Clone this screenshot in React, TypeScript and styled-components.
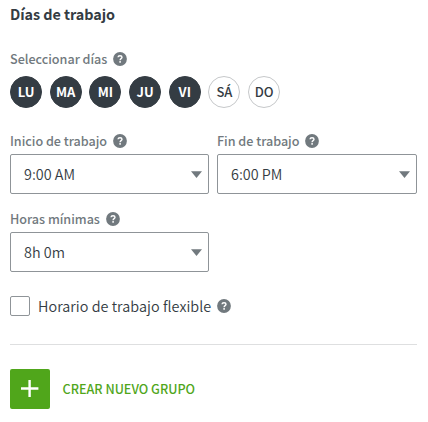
import React from "react";
import styled, { createGlobalStyle } from "styled-components";

const GlobalStyle = createGlobalStyle`
  *, *::before, *::after { box-sizing: border-box; }
  body {
    margin: 0;
    background: #fff;
    color: #343c43;
    font-family: "Noto Sans CJK SC", "Noto Sans", sans-serif;
  }
  button { font-family: inherit; margin: 0; padding: 0; }
`;

const Panel = styled.main`
  display: flex;
  flex-direction: column;
  width: 427px;
  height: 422px;
  padding: 4px 10px 0;
`;

const Title = styled.h2`
  margin: 0 0 35px;
  font-size: 14.4px;
  font-weight: 700;
  line-height: 20px;
  letter-spacing: -0.05px;
`;

const LabelRow = styled.div`
  display: flex;
  align-items: center;
  gap: 6px;
  height: 20px;
  margin: -10px 0 3px;
`;

const Label = styled.span`
  color: #71797e;
  font-size: 12.6px;
  font-weight: 500;
  line-height: 20px;
  letter-spacing: -0.02px;
  white-space: nowrap;
`;

const HelpSvg = styled.svg`
  display: block;
  flex: none;
  width: 14px;
  height: 14px;
`;

const Days = styled.div`
  display: flex;
  gap: 7.7px;
  margin: 4px 0 33px;
`;

const Day = styled.button<{ $on: boolean }>`
  width: 32px;
  height: 32px;
  border: 1px solid ${(p) => (p.$on ? "#343c43" : "#c6c8ca")};
  border-radius: 50%;
  background: ${(p) => (p.$on ? "#343c43" : "#fff")};
  color: ${(p) => (p.$on ? "#fff" : "#343c43")};
  font-size: 13px;
  font-weight: ${(p) => (p.$on ? 700 : 500)};
  line-height: 30px;
`;

const Fields = styled.div`
  display: grid;
  grid-template-columns: 199px 200px;
  column-gap: 8px;
  row-gap: 25px;
`;

const Select = styled.button`
  display: flex;
  align-items: center;
  justify-content: space-between;
  width: 100%;
  height: 40px;
  padding: 0 6px 0 13px;
  border: 1px solid #8f9498;
  border-radius: 2px;
  background: #fff;
  color: #343c43;
  font-size: 14.4px;
  font-weight: 350;
  line-height: 20px;
`;

const CaretSvg = styled.svg`
  display: block;
  width: 11px;
  height: 7px;
  fill: #71797e;
`;

const FlexibleRow = styled.label`
  display: flex;
  align-items: center;
  height: 20px;
  margin-top: 24px;
  font-size: 14.4px;
  font-weight: 350;
  line-height: 20px;
  letter-spacing: 0.04px;
`;

const Checkbox = styled.span`
  width: 20px;
  height: 20px;
  margin-right: 8px;
  border: 1px solid #8f9498;
  border-radius: 2px;
`;

const FlexibleText = styled.span`
  margin-right: 6px;
`;

const Divider = styled.hr`
  width: 100%;
  height: 1px;
  margin: 28px 0 24px;
  border: 0;
  background: #dedfe0;
`;

const CreateButton = styled.button`
  display: flex;
  align-items: center;
  gap: 12.5px;
  height: 40px;
  border: 0;
  background: none;
  color: #50a61b;
  font-size: 12.6px;
  font-weight: 500;
  line-height: 20px;
`;

const PlusBox = styled.span`
  display: grid;
  place-items: center;
  width: 40px;
  height: 40px;
  border-radius: 2px;
  background: #50a61b;
`;

const Help = () => (
  <HelpSvg viewBox="0 0 14 14" aria-hidden="true">
    <circle cx="7" cy="7" r="6.9" fill="#71797e" />
    <path d="M5 5.2C5.2 3.2 9 3.2 9 5.3C9 6.7 7.1 6.6 7.1 8.2" fill="none" stroke="#fff" strokeWidth="1.4" />
    <rect x="6.3" y="9.1" width="1.6" height="1.6" fill="#fff" />
  </HelpSvg>
);

const Field = ({ label, value }: { label: string; value: string }) => (
  <div>
    <LabelRow>
      <Label>{label}</Label>
      <Help />
    </LabelRow>
    <Select type="button">
      {value}
      <CaretSvg viewBox="0 0 11 7" aria-hidden="true">
        <path d="M0 .3h11L5.5 7z" />
      </CaretSvg>
    </Select>
  </div>
);

const days = ["LU", "MA", "MI", "JU", "VI", "SÁ", "DO"];

export default function App() {
  return (
    <>
      <GlobalStyle />
      <Panel>
        <Title>Días de trabajo</Title>
        <LabelRow>
          <Label>Seleccionar días</Label>
          <Help />
        </LabelRow>
        <Days>
          {days.map((d, i) => (
            <Day key={d} type="button" $on={i < 5}>{d}</Day>
          ))}
        </Days>
        <Fields>
          <Field label="Inicio de trabajo" value="9:00 AM" />
          <Field label="Fin de trabajo" value="6:00 PM" />
          <Field label="Horas mínimas" value="8h 0m" />
        </Fields>
        <FlexibleRow>
          <Checkbox />
          <FlexibleText>Horario de trabajo flexible</FlexibleText>
          <Help />
        </FlexibleRow>
        <Divider />
        <CreateButton type="button">
          <PlusBox>
            <svg width="18" height="18" viewBox="0 0 18 18">
              <path d="M8.6 0v17M0 8.5h17.4" stroke="#fff" strokeWidth="2.4" />
            </svg>
          </PlusBox>
          CREAR NUEVO GRUPO
        </CreateButton>
      </Panel>
    </>
  );
}
